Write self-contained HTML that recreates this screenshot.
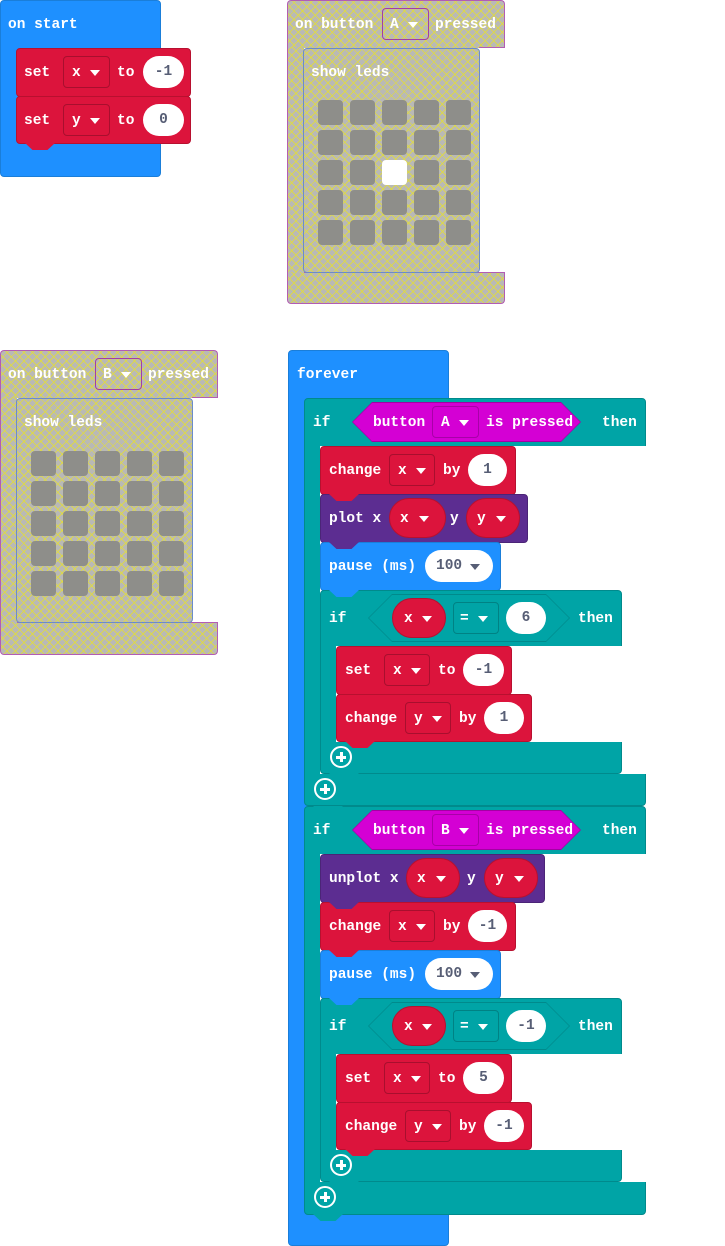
<!DOCTYPE html>
<html><head><meta charset="utf-8"><style>
body{margin:0;width:725px;height:1246px;background:#fff;position:relative;overflow:hidden;font-family:"Liberation Mono","DejaVu Sans Mono",monospace;font-weight:bold;font-size:14.5px;color:#fff}
div,span{position:absolute;box-sizing:border-box}
.t{height:20px;line-height:22px;white-space:pre}
.blue{background:#1e90ff;border:1px solid #1a7ed9}
.red{background:#dc143c;border:1px solid #b8102f}
.teal{background:#00a4a6;border:1px solid #008a8c}
.pur{background:#5c2d91;border:1px solid #4b2477}
.dis{background:repeating-linear-gradient(45deg,rgba(225,220,60,.8) 0 1px,transparent 1px 6px),repeating-linear-gradient(-45deg,rgba(225,220,60,.8) 0 1px,transparent 1px 6px),#b9b9b6}
.r4{border-radius:4px}
.dd{border-radius:4px;height:32px}
.pill{background:#fff;border-radius:16px;height:32px;color:#575e75;text-align:center;line-height:33px}
.tri{width:0;height:0;border-left:5px solid transparent;border-right:5px solid transparent;border-top:6px solid #fff}
.gtri{border-top-color:#575e75}
.led{width:25px;height:25px;border-radius:4px;background:#8e8e8a}
.plus{width:22px;height:22px;border:2px solid #fff;border-radius:50%}
.plus:before{content:"";position:absolute;left:4px;top:7.5px;width:10px;height:3px;background:#fff}
.plus:after{content:"";position:absolute;left:7.5px;top:4px;width:3px;height:10px;background:#fff}
.tab{height:7px;width:30px;clip-path:polygon(0 0,100% 0,75% 100%,25% 100%)}
</style></head><body>

<!-- on start -->
<div class="blue r4" style="left:0;top:0;width:161px;height:177px"></div>
<span class="t" style="left:8px;top:14px">on start</span>
<div class="red r4" style="left:16px;top:48px;width:175px;height:49px"></div>
<span class="t" style="left:24px;top:62px">set</span>
<div class="red dd" style="left:63px;top:56px;width:47px;border-color:#a80f2e"></div>
<span class="t" style="left:72px;top:62px">x</span><div class="tri" style="left:90px;top:70px"></div>
<span class="t" style="left:117px;top:62px">to</span>
<div class="pill" style="left:143px;top:56px;width:41px">-1</div>
<div class="red r4" style="left:16px;top:96px;width:175px;height:48px"></div>
<span class="t" style="left:24px;top:110px">set</span>
<div class="red dd" style="left:63px;top:104px;width:47px;border-color:#a80f2e"></div>
<span class="t" style="left:72px;top:110px">y</span><div class="tri" style="left:90px;top:118px"></div>
<span class="t" style="left:117px;top:110px">to</span>
<div class="pill" style="left:143px;top:104px;width:41px">0</div>
<div class="tab" style="left:25px;top:143px;background:#dc143c"></div>

<!-- on button A (disabled) -->
<div class="dis" style="left:287px;top:0;width:218px;height:48px;border:1px solid #b35cb3;border-bottom:none;border-radius:4px 4px 0 0"></div>
<div class="dis" style="left:287px;top:47px;width:17px;height:226px;border-left:1px solid #b35cb3"></div>
<div class="dis" style="left:287px;top:272px;width:218px;height:32px;border:1px solid #b35cb3;border-top:none;border-radius:0 0 4px 4px"></div>
<div style="left:479px;top:47px;width:26px;height:1px;background:#b35cb3"></div>
<div style="left:304px;top:272px;width:200px;height:1px;background:#b35cb3"></div>
<div class="dis" style="left:303px;top:48px;width:177px;height:225px;border:1px solid #6b8cc9;border-radius:4px"></div>
<span class="t" style="left:311px;top:62px">show leds</span>
<div class="dd" style="left:382px;top:8px;width:47px;border:1.5px solid #a43da4"></div>
<span class="t" style="left:390px;top:14px">A</span><div class="tri" style="left:408px;top:22px"></div>
<span class="t" style="left:295px;top:14px">on button</span>
<span class="t" style="left:435px;top:14px">pressed</span>

<!-- on button B (disabled) -->
<div class="dis" style="left:0;top:350px;width:218px;height:48px;border:1px solid #b35cb3;border-bottom:none;border-radius:4px 4px 0 0"></div>
<div class="dis" style="left:0;top:397px;width:17px;height:226px;border-left:1px solid #b35cb3"></div>
<div class="dis" style="left:0;top:622px;width:218px;height:33px;border:1px solid #b35cb3;border-top:none;border-radius:0 0 4px 4px"></div>
<div style="left:192px;top:397px;width:26px;height:1px;background:#b35cb3"></div>
<div style="left:17px;top:622px;width:200px;height:1px;background:#b35cb3"></div>
<div class="dis" style="left:16px;top:398px;width:177px;height:225px;border:1px solid #6b8cc9;border-radius:4px"></div>
<span class="t" style="left:24px;top:412px">show leds</span>
<div class="dd" style="left:95px;top:358px;width:47px;border:1.5px solid #a43da4"></div>
<span class="t" style="left:103px;top:364px">B</span><div class="tri" style="left:121px;top:372px"></div>
<span class="t" style="left:8px;top:364px">on button</span>
<span class="t" style="left:148px;top:364px">pressed</span>

<!-- LEDs -->
<div class="led" style="left:318px;top:100px"></div><div class="led" style="left:350px;top:100px"></div><div class="led" style="left:382px;top:100px"></div><div class="led" style="left:414px;top:100px"></div><div class="led" style="left:446px;top:100px"></div>
<div class="led" style="left:318px;top:130px"></div><div class="led" style="left:350px;top:130px"></div><div class="led" style="left:382px;top:130px"></div><div class="led" style="left:414px;top:130px"></div><div class="led" style="left:446px;top:130px"></div>
<div class="led" style="left:318px;top:160px"></div><div class="led" style="left:350px;top:160px"></div><div class="led" style="left:382px;top:160px;background:#fff"></div><div class="led" style="left:414px;top:160px"></div><div class="led" style="left:446px;top:160px"></div>
<div class="led" style="left:318px;top:190px"></div><div class="led" style="left:350px;top:190px"></div><div class="led" style="left:382px;top:190px"></div><div class="led" style="left:414px;top:190px"></div><div class="led" style="left:446px;top:190px"></div>
<div class="led" style="left:318px;top:220px"></div><div class="led" style="left:350px;top:220px"></div><div class="led" style="left:382px;top:220px"></div><div class="led" style="left:414px;top:220px"></div><div class="led" style="left:446px;top:220px"></div>

<div class="led" style="left:31px;top:451px"></div><div class="led" style="left:63px;top:451px"></div><div class="led" style="left:95px;top:451px"></div><div class="led" style="left:127px;top:451px"></div><div class="led" style="left:159px;top:451px"></div>
<div class="led" style="left:31px;top:481px"></div><div class="led" style="left:63px;top:481px"></div><div class="led" style="left:95px;top:481px"></div><div class="led" style="left:127px;top:481px"></div><div class="led" style="left:159px;top:481px"></div>
<div class="led" style="left:31px;top:511px"></div><div class="led" style="left:63px;top:511px"></div><div class="led" style="left:95px;top:511px"></div><div class="led" style="left:127px;top:511px"></div><div class="led" style="left:159px;top:511px"></div>
<div class="led" style="left:31px;top:541px"></div><div class="led" style="left:63px;top:541px"></div><div class="led" style="left:95px;top:541px"></div><div class="led" style="left:127px;top:541px"></div><div class="led" style="left:159px;top:541px"></div>
<div class="led" style="left:31px;top:571px"></div><div class="led" style="left:63px;top:571px"></div><div class="led" style="left:95px;top:571px"></div><div class="led" style="left:127px;top:571px"></div><div class="led" style="left:159px;top:571px"></div>

<!-- forever -->
<div class="blue r4" style="left:288px;top:350px;width:161px;height:896px"></div>
<span class="t" style="left:297px;top:364px">forever</span>

<!-- IF 1 -->
<div class="teal r4" style="left:304px;top:398px;width:342px;height:408px"></div>
<div style="left:320px;top:446px;width:327px;height:328px;background:#fff"></div>
<span class="t" style="left:313px;top:412px">if</span>
<div style="left:352px;top:402px;width:229px;height:40px;background:#a300a3;clip-path:polygon(20px 0,209px 0,229px 20px,209px 40px,20px 40px,0 20px)"></div>
<div style="left:353px;top:403px;width:227px;height:38px;background:#d400d4;clip-path:polygon(19px 0,208px 0,227px 19px,208px 38px,19px 38px,0 19px)"></div>
<span class="t" style="left:373px;top:412px">button</span>
<div class="dd" style="left:432px;top:406px;width:47px;border:1px solid #a800a8"></div>
<span class="t" style="left:441px;top:412px">A</span><div class="tri" style="left:459px;top:420px"></div>
<span class="t" style="left:486px;top:412px">is pressed</span>
<span class="t" style="left:602px;top:412px">then</span>

<div class="red r4" style="left:320px;top:446px;width:196px;height:49px"></div>
<span class="t" style="left:329px;top:460px">change</span>
<div class="red dd" style="left:389px;top:454px;width:46px;border-color:#a80f2e"></div>
<span class="t" style="left:398px;top:460px">x</span><div class="tri" style="left:416px;top:468px"></div>
<span class="t" style="left:443px;top:460px">by</span>
<div class="pill" style="left:468px;top:454px;width:39px">1</div>

<div class="pur r4" style="left:320px;top:494px;width:208px;height:49px"></div>
<span class="t" style="left:329px;top:508px">plot x</span>
<div class="red" style="left:389px;top:498px;width:57px;height:40px;border-radius:20px"></div>
<span class="t" style="left:400px;top:508px">x</span><div class="tri" style="left:419px;top:516px"></div>
<span class="t" style="left:450px;top:508px">y</span>
<div class="red" style="left:466px;top:498px;width:54px;height:40px;border-radius:20px"></div>
<span class="t" style="left:477px;top:508px">y</span><div class="tri" style="left:496px;top:516px"></div>
<div class="tab" style="left:329px;top:494px;background:#dc143c"></div>

<div class="blue r4" style="left:320px;top:542px;width:181px;height:49px"></div>
<span class="t" style="left:329px;top:556px">pause (ms)</span>
<div class="pill" style="left:425px;top:550px;width:68px;text-align:left;padding-left:11px">100</div><div class="tri gtri" style="left:470px;top:564px"></div>
<div class="tab" style="left:329px;top:542px;background:#5c2d91"></div>

<div class="teal r4" style="left:320px;top:590px;width:302px;height:184px"></div>
<div style="left:336px;top:646px;width:287px;height:96px;background:#fff"></div>
<div class="tab" style="left:329px;top:590px;background:#1e90ff"></div>
<span class="t" style="left:329px;top:608px">if</span>
<div style="left:368px;top:594px;width:202px;height:48px;background:#008a8c;clip-path:polygon(24px 0,178px 0,202px 24px,178px 48px,24px 48px,0 24px)"></div>
<div style="left:369px;top:595px;width:200px;height:46px;background:#00a4a6;clip-path:polygon(23px 0,177px 0,200px 23px,177px 46px,23px 46px,0 23px)"></div>
<div class="red" style="left:392px;top:598px;width:54px;height:40px;border-radius:20px"></div>
<span class="t" style="left:404px;top:608px">x</span><div class="tri" style="left:422px;top:616px"></div>
<div class="teal dd" style="left:453px;top:602px;width:46px;border-color:#008284"></div>
<span class="t" style="left:460px;top:608px">=</span><div class="tri" style="left:478px;top:616px"></div>
<div class="pill" style="left:506px;top:602px;width:40px">6</div>
<span class="t" style="left:578px;top:608px">then</span>

<div class="red r4" style="left:336px;top:646px;width:176px;height:49px"></div>
<span class="t" style="left:345px;top:660px">set</span>
<div class="red dd" style="left:384px;top:654px;width:46px;border-color:#a80f2e"></div>
<span class="t" style="left:393px;top:660px">x</span><div class="tri" style="left:411px;top:668px"></div>
<span class="t" style="left:438px;top:660px">to</span>
<div class="pill" style="left:463px;top:654px;width:41px">-1</div>
<div class="red r4" style="left:336px;top:694px;width:196px;height:48px"></div>
<span class="t" style="left:345px;top:708px">change</span>
<div class="red dd" style="left:405px;top:702px;width:46px;border-color:#a80f2e"></div>
<span class="t" style="left:414px;top:708px">y</span><div class="tri" style="left:432px;top:716px"></div>
<span class="t" style="left:459px;top:708px">by</span>
<div class="pill" style="left:484px;top:702px;width:40px">1</div>
<div class="tab" style="left:345px;top:741px;background:#dc143c"></div>
<div class="plus" style="left:330px;top:746px"></div>
<div class="tab" style="left:329px;top:773px;background:#00a4a6"></div>
<div class="plus" style="left:314px;top:778px"></div>

<!-- IF 2 -->
<div class="teal r4" style="left:304px;top:806px;width:342px;height:409px"></div>
<div style="left:320px;top:854px;width:327px;height:328px;background:#fff"></div>
<div class="tab" style="left:313px;top:806px;background:#00a4a6"></div>
<span class="t" style="left:313px;top:820px">if</span>
<div style="left:352px;top:810px;width:229px;height:40px;background:#a300a3;clip-path:polygon(20px 0,209px 0,229px 20px,209px 40px,20px 40px,0 20px)"></div>
<div style="left:353px;top:811px;width:227px;height:38px;background:#d400d4;clip-path:polygon(19px 0,208px 0,227px 19px,208px 38px,19px 38px,0 19px)"></div>
<span class="t" style="left:373px;top:820px">button</span>
<div class="dd" style="left:432px;top:814px;width:47px;border:1px solid #a800a8"></div>
<span class="t" style="left:441px;top:820px">B</span><div class="tri" style="left:459px;top:828px"></div>
<span class="t" style="left:486px;top:820px">is pressed</span>
<span class="t" style="left:602px;top:820px">then</span>

<div class="pur r4" style="left:320px;top:854px;width:225px;height:49px"></div>
<span class="t" style="left:329px;top:868px">unplot x</span>
<div class="red" style="left:406px;top:858px;width:54px;height:40px;border-radius:20px"></div>
<span class="t" style="left:417px;top:868px">x</span><div class="tri" style="left:436px;top:876px"></div>
<span class="t" style="left:467px;top:868px">y</span>
<div class="red" style="left:484px;top:858px;width:54px;height:40px;border-radius:20px"></div>
<span class="t" style="left:495px;top:868px">y</span><div class="tri" style="left:514px;top:876px"></div>

<div class="red r4" style="left:320px;top:902px;width:196px;height:49px"></div>
<div class="tab" style="left:329px;top:902px;background:#5c2d91"></div>
<span class="t" style="left:329px;top:916px">change</span>
<div class="red dd" style="left:389px;top:910px;width:46px;border-color:#a80f2e"></div>
<span class="t" style="left:398px;top:916px">x</span><div class="tri" style="left:416px;top:924px"></div>
<span class="t" style="left:443px;top:916px">by</span>
<div class="pill" style="left:468px;top:910px;width:39px">-1</div>

<div class="blue r4" style="left:320px;top:950px;width:181px;height:49px"></div>
<div class="tab" style="left:329px;top:950px;background:#dc143c"></div>
<span class="t" style="left:329px;top:964px">pause (ms)</span>
<div class="pill" style="left:425px;top:958px;width:68px;text-align:left;padding-left:11px">100</div><div class="tri gtri" style="left:470px;top:972px"></div>

<div class="teal r4" style="left:320px;top:998px;width:302px;height:184px"></div>
<div style="left:336px;top:1054px;width:287px;height:96px;background:#fff"></div>
<div class="tab" style="left:329px;top:998px;background:#1e90ff"></div>
<span class="t" style="left:329px;top:1016px">if</span>
<div style="left:368px;top:1002px;width:202px;height:48px;background:#008a8c;clip-path:polygon(24px 0,178px 0,202px 24px,178px 48px,24px 48px,0 24px)"></div>
<div style="left:369px;top:1003px;width:200px;height:46px;background:#00a4a6;clip-path:polygon(23px 0,177px 0,200px 23px,177px 46px,23px 46px,0 23px)"></div>
<div class="red" style="left:392px;top:1006px;width:54px;height:40px;border-radius:20px"></div>
<span class="t" style="left:404px;top:1016px">x</span><div class="tri" style="left:422px;top:1024px"></div>
<div class="teal dd" style="left:453px;top:1010px;width:46px;border-color:#008284"></div>
<span class="t" style="left:460px;top:1016px">=</span><div class="tri" style="left:478px;top:1024px"></div>
<div class="pill" style="left:506px;top:1010px;width:40px">-1</div>
<span class="t" style="left:578px;top:1016px">then</span>

<div class="red r4" style="left:336px;top:1054px;width:176px;height:49px"></div>
<span class="t" style="left:345px;top:1068px">set</span>
<div class="red dd" style="left:384px;top:1062px;width:46px;border-color:#a80f2e"></div>
<span class="t" style="left:393px;top:1068px">x</span><div class="tri" style="left:411px;top:1076px"></div>
<span class="t" style="left:438px;top:1068px">to</span>
<div class="pill" style="left:463px;top:1062px;width:41px">5</div>
<div class="red r4" style="left:336px;top:1102px;width:196px;height:48px"></div>
<span class="t" style="left:345px;top:1116px">change</span>
<div class="red dd" style="left:405px;top:1110px;width:46px;border-color:#a80f2e"></div>
<span class="t" style="left:414px;top:1116px">y</span><div class="tri" style="left:432px;top:1124px"></div>
<span class="t" style="left:459px;top:1116px">by</span>
<div class="pill" style="left:484px;top:1110px;width:40px">-1</div>
<div class="tab" style="left:345px;top:1149px;background:#dc143c"></div>
<div class="plus" style="left:330px;top:1154px"></div>
<div class="tab" style="left:329px;top:1181px;background:#00a4a6"></div>
<div class="plus" style="left:314px;top:1186px"></div>
<div class="tab" style="left:313px;top:1214px;background:#00a4a6"></div>

</body></html>
